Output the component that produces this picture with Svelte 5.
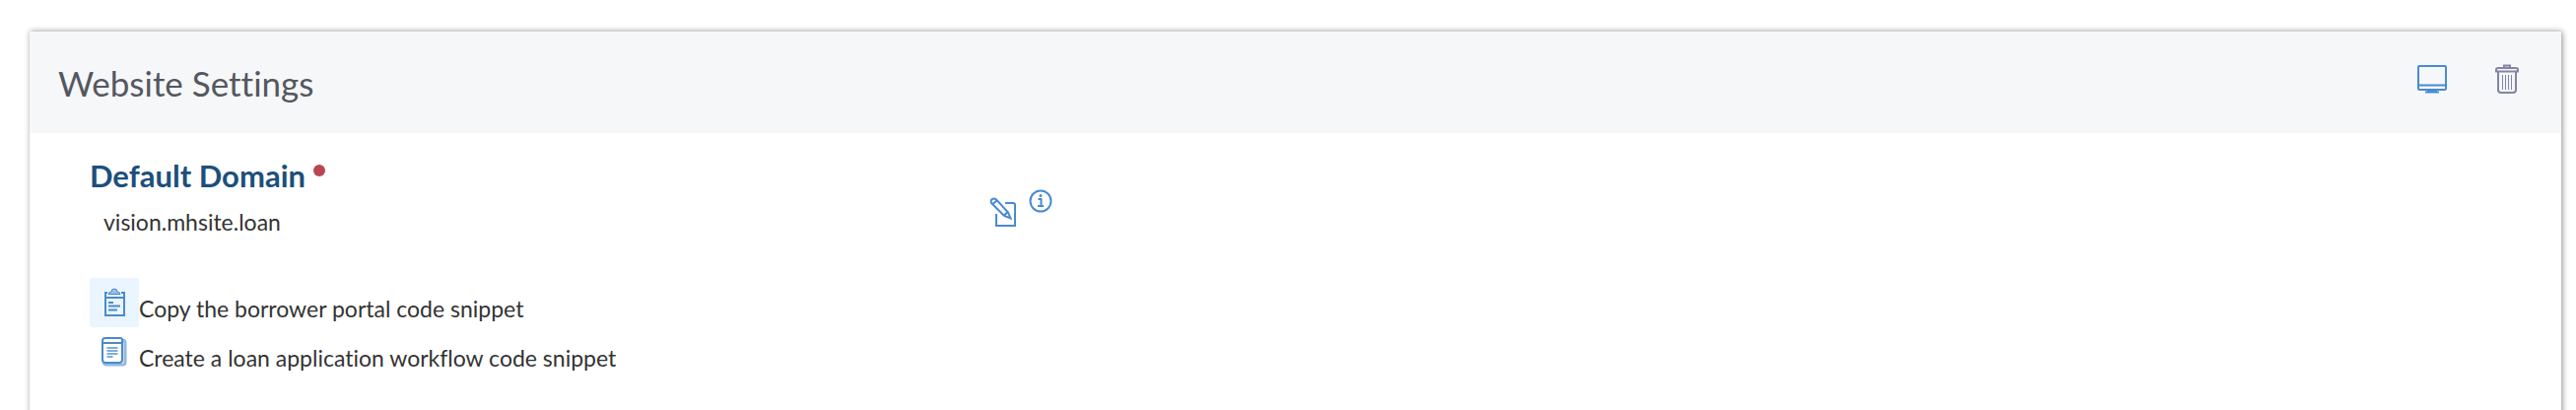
<script>
  let domain = $state('vision.mhsite.loan');

  const snippets = [
    { id: 'portal', icon: 'clipboard', label: 'Copy the borrower portal code snippet', active: true },
    { id: 'workflow', icon: 'pages', label: 'Create a loan application workflow code snippet', active: false }
  ];
</script>

<main class="page">
  <section class="card">
    <header class="card-header">
      <h1>Website Settings</h1>
      <div class="header-actions">
        <button class="icon-btn" aria-label="Preview website">
          <svg width="30" height="30" viewBox="0 0 30 30">
            <rect x="1" y="2" width="28" height="24" rx="1" />
            <path d="M1 21.5h28M10 27h10M8 28.5h14" />
          </svg>
        </button>
        <button class="icon-btn muted" aria-label="Delete website">
          <svg width="24" height="30" viewBox="0 0 24 30">
            <path d="M9 3.5V1.5h6v2M1 7.5V5.5q0-1.5 2-1.5h18q2 0 2 1.5v2zM3 8v18q0 3 3 3h12q3 0 3-3V8" />
            <path class="thin" d="M7.5 11v15M10.5 11v15M13.5 11v15M16.5 11v15" />
          </svg>
        </button>
      </div>
    </header>

    <div class="card-body">
      <div class="domain">
        <div class="domain-field">
          <h2>Default Domain <span class="required"></span></h2>
          <p>{domain}</p>
        </div>
        <div class="domain-actions">
          <button class="icon-btn edit" aria-label="Edit default domain">
            <svg width="28" height="31" viewBox="0 0 28 31">
              <path d="M16 6h8q2 0 2 2v21H7V17" />
              <path class="pencil" d="M2 6q-1-3 1-4t4 .5l12 13 2.500 6-6.500-2.500zM3 7.500l5-4.500M15 18.500l4-4" />
            </svg>
          </button>
          <button class="icon-btn" aria-label="About the default domain">
            <svg width="24" height="24" viewBox="0 0 24 24">
              <circle cx="12" cy="12" r="10.5" />
              <path d="M9.5 10h3v7M9 17h6" />
              <circle class="dot" cx="12" cy="6.5" r="1.5" />
            </svg>
          </button>
        </div>
      </div>

      <ul class="snippets">
        {#each snippets as snippet (snippet.id)}
          <li>
            <button class="tile" class:active={snippet.active} aria-labelledby={snippet.id}>
              {#if snippet.icon === 'clipboard'}
                <svg width="26" height="30" viewBox="0 0 26 30">
                  <path d="M6 5H4v23h19V5h-3M4 10h19" />
                  <path class="fill" d="M7 6.5q0-2 3-2.5 0-3 3-3t3 3q3 .5 3 2.5z" />
                  <path class="bold" d="M7 15h5M7 18.5h12M7 22.5h9" />
                </svg>
              {:else}
                <svg width="28" height="30" viewBox="0 0 28 30">
                  <path class="pale" d="M22 3q3 0 3 3v20q0 2-3 2H6q-2 0-3-2" />
                  <path d="M5 1h15q2 0 2 2v20q0 3-3 3H5q-3 0-3-3V4q0-3 3-3zM2 6h20" />
                  <path class="lines" d="M6.5 11h11M6.5 14h11M6.5 17h11M6.5 20h6" />
                </svg>
              {/if}
            </button>
            <span id={snippet.id}>{snippet.label}</span>
          </li>
        {/each}
      </ul>
    </div>
  </section>
</main>

<style>
  :global(body) {
    background: #fff;
    font-family: Lato, 'Open Sans', sans-serif;
    font-variant-ligatures: none;
  }

  .page {
    display: flex;
    box-sizing: border-box;
    height: 100vh;
    min-height: 400px;
    padding: 32px 15px 0 30px;
    overflow: hidden;
  }

  .card {
    flex: 1;
    margin-bottom: -16px;
    background: #fff;
    box-shadow: 1px 0 6px rgba(0, 0, 0, 0.45);
  }

  .card-header {
    display: flex;
    align-items: center;
    justify-content: space-between;
    height: 103px;
    padding: 0 43px 0 29px;
    background: #f5f7f9;
  }

  h1, h2, p {
    margin: 0;
  }

  h1 {
    color: #54575f;
    font-size: 35px;
    font-weight: 400;
    line-height: 40px;
  }

  .header-actions {
    display: flex;
    gap: 49px;
    margin-bottom: 8px;
  }

  .icon-btn {
    display: flex;
    padding: 0;
    border: 0;
    background: none;
    color: #4a8ad4;
    cursor: pointer;
  }

  .muted {
    color: #8385a3;
  }

  svg {
    display: block;
    fill: none;
    stroke: currentColor;
    stroke-width: 2;
  }

  .thin {
    stroke-width: 1;
  }

  .pencil {
    fill: #fff;
  }

  .dot {
    fill: currentColor;
    stroke: none;
  }

  .fill {
    fill: currentColor;
    fill-opacity: 0.5;
    stroke-width: 1;
  }

  .bold {
    stroke-width: 2;
  }

  .pale {
    opacity: 0.6;
    stroke-width: 3;
  }

  .lines {
    opacity: 0.7;
  }

  .card-body {
    padding: 23px 61px;
  }

  .domain {
    display: flex;
    align-items: center;
  }

  .domain-field {
    width: 37%;
  }

  h2 {
    display: flex;
    gap: 8px;
    color: #1c4f7c;
    font-size: 31px;
    font-weight: 700;
    line-height: 40px;
  }

  .required {
    width: 12px;
    height: 12px;
    margin-top: 9px;
    border-radius: 50%;
    background: #b94653;
  }

  p {
    padding: 13px 14px 12px;
    color: #333;
    font-size: 23px;
    line-height: 28px;
  }

  .domain-actions {
    display: flex;
    gap: 12px;
    padding: 14px 0 0 8px;
  }

  .edit {
    padding-top: 8px;
  }

  .snippets {
    margin: 31px 0 0;
    padding: 0;
    list-style: none;
  }

  li {
    display: flex;
    align-items: center;
    color: #333;
    font-size: 23px;
    line-height: 28px;
  }

  li span {
    padding-top: 12px;
  }

  .tile {
    display: flex;
    align-items: center;
    justify-content: center;
    width: 50px;
    height: 50px;
    padding: 0;
    border: 0;
    border-radius: 3px;
    background: none;
    color: #4a8bcb;
    cursor: pointer;
  }

  .tile.active {
    background: #ebf5ff;
  }
</style>
